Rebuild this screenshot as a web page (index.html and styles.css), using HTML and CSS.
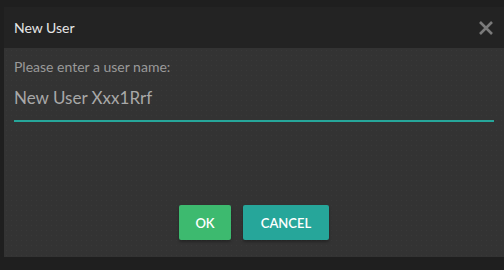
FILE: index.html
```html
<!DOCTYPE html>
<html lang="en">
<head>
    <meta charset="UTF-8">
    <title>New User</title>
    <link rel="stylesheet" href="styles.css">
</head>
<body>
    <div class="dialog">
        <div class="dialogHeader">
            <div class="dialogTitle">New User</div>
            <button class="closeButton" aria-label="Close">
                <svg width="16" height="16" viewBox="0 0 16 16">
                    <path d="M2 2 L14 14 M14 2 L2 14" stroke="#7a7a7a" stroke-width="2.6" stroke-linecap="butt" />
                </svg>
            </button>
        </div>
        <div class="dialogBody">
            <label for="userName" class="label">Please enter a user name:</label>
            <input type="text" id="userName" class="inputField" value="New User Xxx1Rrf" />
            <div class="buttonRow">
                <button class="btn okButton">OK</button>
                <button class="btn cancelButton">CANCEL</button>
            </div>
        </div>
    </div>
</body>
</html>
```

FILE: styles.css
```css
body {
    margin: 0;
    font-family: 'Lato', sans-serif;
    background: #1f1f1f;
    height: 270px;
    overflow: hidden;
}

.dialog {
    margin: 7px 0 0 4px;
}

.dialogHeader {
    height: 41px;
    background: #232323;
    display: flex;
    align-items: center;
    justify-content: space-between;
    padding: 0 10px;
}

.dialogTitle {
    color: #e6e6e6;
    font-size: 14px;
}

.closeButton {
    background: none;
    border: none;
    padding: 0;
    width: 16px;
    height: 16px;
    display: flex;
    cursor: pointer;
}

.dialogBody {
    height: 209px;
    box-sizing: border-box;
    background-color: #333333;
    background-image: radial-gradient(#393939 0.8px, transparent 1px);
    background-size: 5px 5px;
    padding: 10px 10px 17px 10px;
    display: flex;
    flex-direction: column;
}

.label {
    color: #9a9a9a;
    font-size: 14px;
}

.inputField {
    background: transparent;
    border: none;
    border-bottom: 2px solid #26a69a;
    color: #a8a8a8;
    font-family: 'Lato', sans-serif;
    font-size: 17px;
    padding: 11px 0 12px 0;
    margin-top: 1px;
    outline: none;
}

.buttonRow {
    margin-top: auto;
    display: flex;
    justify-content: center;
    gap: 12px;
}

.btn {
    height: 35px;
    border: none;
    border-radius: 2px;
    color: white;
    font-family: 'Lato', sans-serif;
    font-size: 13px;
    font-weight: 600;
    box-shadow: 0px 2px 3px rgba(0, 0, 0, 0.3);
    cursor: pointer;
}

.okButton {
    width: 52px;
    background: #3dba6f;
}

.cancelButton {
    width: 86px;
    background: #26a69a;
}
```
